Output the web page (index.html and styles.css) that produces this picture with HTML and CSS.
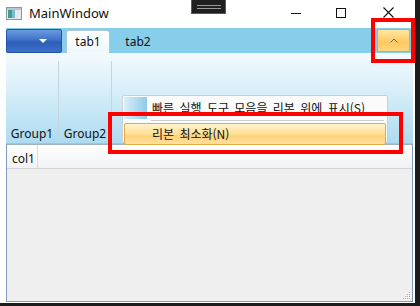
FILE: index.html
```html
<!DOCTYPE html>
<html lang="ko">
<head>
    <meta charset="UTF-8">
    <title>MainWindow</title>
    <link rel="stylesheet" href="styles.css">
</head>
<body>
    <div class="screen">
        <div class="window">
            <!-- title bar -->
            <div class="titlebar">
                <svg class="app-icon" width="16" height="13" viewBox="0 0 16 13">
                    <rect x="0.5" y="0.5" width="15" height="12" fill="#e4e9ef" stroke="#8a96a3"/>
                    <rect x="2" y="3" width="4" height="8" fill="#3f9f83"/>
                    <rect x="6" y="3" width="3" height="8" fill="#7fb7d6"/>
                    <rect x="1" y="1" width="14" height="2" fill="#b9c6d4"/>
                </svg>
                <span class="title">MainWindow</span>
                <div class="caption-buttons">
                    <span class="cap cap-min"></span>
                    <span class="cap cap-max"></span>
                    <svg class="cap cap-close" width="11" height="11" viewBox="0 0 11 11">
                        <path d="M0.5 0.5 L10.5 10.5 M10.5 0.5 L0.5 10.5" stroke="#111" stroke-width="1.1"/>
                    </svg>
                </div>
            </div>

            <div class="client">
                <!-- ribbon -->
                <div class="ribbon">
                    <div class="tabrow">
                        <div class="app-menu"><span class="app-arrow"></span></div>
                        <div class="tab active">tab1</div>
                        <div class="tab">tab2</div>
                        <div class="minimize-btn">
                            <svg width="8" height="5" viewBox="0 0 8 5">
                                <path d="M0.5 4.5 L4 1 L7.5 4.5" fill="none" stroke="#5b6f86" stroke-width="1"/>
                            </svg>
                        </div>
                    </div>
                    <div class="ribbon-body">
                        <div class="group"><span class="group-label">Group1</span></div>
                        <div class="group-sep"></div>
                        <div class="group"><span class="group-label">Group2</span></div>
                        <div class="group-sep"></div>
                    </div>
                </div>

                <!-- data grid -->
                <div class="grid">
                    <div class="grid-header">
                        <div class="col-head">col1</div>
                    </div>
                    <div class="grid-body">
                        <svg class="grip" width="9" height="9" viewBox="0 0 9 9">
                            <g fill="#a8b4c2">
                                <rect x="7" y="1" width="1" height="1"/>
                                <rect x="5" y="3" width="1" height="1"/><rect x="7" y="3" width="1" height="1"/>
                                <rect x="3" y="5" width="1" height="1"/><rect x="5" y="5" width="1" height="1"/><rect x="7" y="5" width="1" height="1"/>
                                <rect x="1" y="7" width="1" height="1"/><rect x="3" y="7" width="1" height="1"/><rect x="5" y="7" width="1" height="1"/><rect x="7" y="7" width="1" height="1"/>
                            </g>
                        </svg>
                    </div>
                </div>
            </div>
        </div>

        <!-- ribbon context menu -->
        <div class="context-menu">
            <div class="menu-item">
                <span class="menu-icon"></span>
                <span class="menu-text">빠른 실행 도구 모음을 리본 위에 표시(S)</span>
            </div>
            <div class="menu-sep"></div>
            <div class="menu-item hot">
                <span class="menu-icon"></span>
                <span class="menu-text">리본 최소화(N)</span>
            </div>
        </div>

        <!-- annotation boxes -->
        <div class="mark mark-btn"></div>
        <div class="mark mark-menu"></div>

        <div class="snap-handle"><span></span><span></span></div>
    </div>
</body>
</html>
```

FILE: styles.css
```css
body {
    margin: 0;
    background: #1c1c1c;
    font-family: "Noto Sans", "Noto Sans CJK KR", sans-serif;
    font-size: 12px;
    color: #111;
}

.screen {
    position: relative;
    width: 420px;
    height: 306px;
    overflow: hidden;
}

.window {
    width: 415px;
    height: 303px;
    background: #fff;
    padding: 0 2px 1px 6px;
    box-sizing: border-box;
    display: flex;
    flex-direction: column;
}

/* Title bar */
.titlebar {
    height: 28px;
    display: flex;
    align-items: center;
    flex-shrink: 0;
}

.app-icon {
    margin-top: -1px;
}

.title {
    margin-left: 7px;
    font-size: 13px;
    margin-top: -2px;
}

.caption-buttons {
    margin-left: auto;
    display: flex;
    align-items: center;
    margin-right: 19px;
    margin-top: -3px;
}

.cap {
    display: block;
}

.cap-min {
    width: 10px;
    height: 1px;
    background: #111;
    margin-top: 2px;
}

.cap-max {
    width: 8px;
    height: 8px;
    border: 1px solid #111;
    margin-left: 35px;
}

.cap-close {
    margin-left: 37px;
}

.client {
    flex: 1;
    display: flex;
    flex-direction: column;
}

/* Ribbon */
.tabrow {
    height: 25px;
    background: #87ceeb;
    display: flex;
    align-items: flex-end;
}

.app-menu {
    width: 56px;
    height: 24px;
    box-sizing: border-box;
    border: 1px solid #2352a8;
    border-radius: 2px;
    background: linear-gradient(#6b9be0, #3f72c8 45%, #2d5fb9 55%, #3c6fc6);
    display: flex;
    align-items: center;
    justify-content: flex-end;
    padding-right: 14px;
}

.app-arrow {
    width: 0;
    height: 0;
    border-left: 4px solid transparent;
    border-right: 4px solid transparent;
    border-top: 4px solid #fff;
}

.tab {
    width: 44px;
    height: 23px;
    box-sizing: border-box;
    display: flex;
    align-items: center;
    justify-content: center;
    margin-left: 6px;
    padding-bottom: 1px;
}

.tab.active {
    margin-left: 4px;
    background: linear-gradient(#ffffff, #eef8fd);
    border: 1px solid #a9c6dc;
    border-bottom: none;
    border-radius: 3px 3px 0 0;
}

.minimize-btn {
    margin-left: auto;
    margin-right: 3px;
    margin-bottom: 1px;
    width: 33px;
    height: 23px;
    box-sizing: border-box;
    border: 1px solid #d9a94c;
    border-radius: 2px;
    background: linear-gradient(#ffe6a3, #ffcd6a 50%, #ffc95e 60%, #ffd782);
    display: flex;
    align-items: center;
    justify-content: center;
}

.ribbon-body {
    height: 91px;
    box-sizing: border-box;
    background: linear-gradient(#f4fafd, #d9eff9 40%, #acdbf1);
    border-bottom: 1px solid #a9c2d2;
    display: flex;
}

.group {
    width: 52px;
    display: flex;
    align-items: flex-end;
    justify-content: center;
    padding-bottom: 1px;
}

.group-sep {
    width: 1px;
    background: #c3d6e0;
    margin: 8px 0 8px;
}

/* Grid */
.grid {
    flex: 1;
    border: 1px solid #7d9cc0;
    border-top-color: #9eb3c3;
    display: flex;
    flex-direction: column;
}

.grid-header {
    height: 24px;
    box-sizing: border-box;
    background: linear-gradient(#ffffff, #f1f2f4);
    border-bottom: 1px solid #d4d4d4;
    display: flex;
}

.col-head {
    width: 31px;
    box-sizing: border-box;
    padding-left: 5px;
    border-right: 1px solid #dcdcdc;
    display: flex;
    align-items: center;
    padding-top: 3px;
}

.grid-body {
    flex: 1;
    background: #efefef;
    display: flex;
    align-items: flex-end;
    justify-content: flex-end;
}

.grip {
    margin: 0 1px 1px 0;
}

/* Context menu */
.context-menu {
    position: absolute;
    left: 122px;
    top: 95px;
    width: 266px;
    height: 48px;
    box-sizing: border-box;
    background: #fbfbfb;
    border: 1px solid #c9cfd6;
    border-radius: 2px;
    padding: 1px;
    font-family: "Noto Sans CJK KR", sans-serif;
    word-spacing: 2px;
}

.menu-item {
    height: 22px;
    display: flex;
    align-items: center;
    box-sizing: border-box;
}

.menu-icon {
    width: 23px;
    height: 100%;
    background: linear-gradient(to right, #d9eef9, #8ecbea);
}

.menu-text {
    margin-left: 5px;
    margin-top: -1px;
}

.menu-sep {
    margin: 1px 2px 1px 27px;
    border-top: 1px solid #c9ccd0;
    height: 0;
    border-bottom: 1px solid #fff;
}

.menu-item.hot {
    border: 1px solid #e3ad45;
    border-radius: 2px;
    background: linear-gradient(#fff3cf, #ffdf94 50%, #ffd27a 60%, #ffe0a0);
}

.menu-item.hot .menu-icon {
    background: none;
}

.menu-item.hot .menu-text {
    margin-left: 4px;
}

/* Annotation boxes */
.mark {
    position: absolute;
    border: 4px solid #ff0000;
    box-sizing: border-box;
}

.mark-btn {
    left: 371px;
    top: 18px;
    width: 44px;
    height: 45px;
}

.mark-menu {
    left: 108px;
    top: 112px;
    width: 295px;
    height: 42px;
}

/* Snap handle at top */
.snap-handle {
    position: absolute;
    left: 191px;
    top: 0;
    width: 35px;
    height: 14px;
    box-sizing: border-box;
    background: #1f1f1f;
    border: 1px solid #5a5a5a;
    border-top: none;
    display: flex;
    flex-direction: column;
    align-items: center;
    justify-content: center;
    gap: 2px;
}

.snap-handle span {
    width: 24px;
    height: 1px;
    background: #9a9a9a;
}
```
